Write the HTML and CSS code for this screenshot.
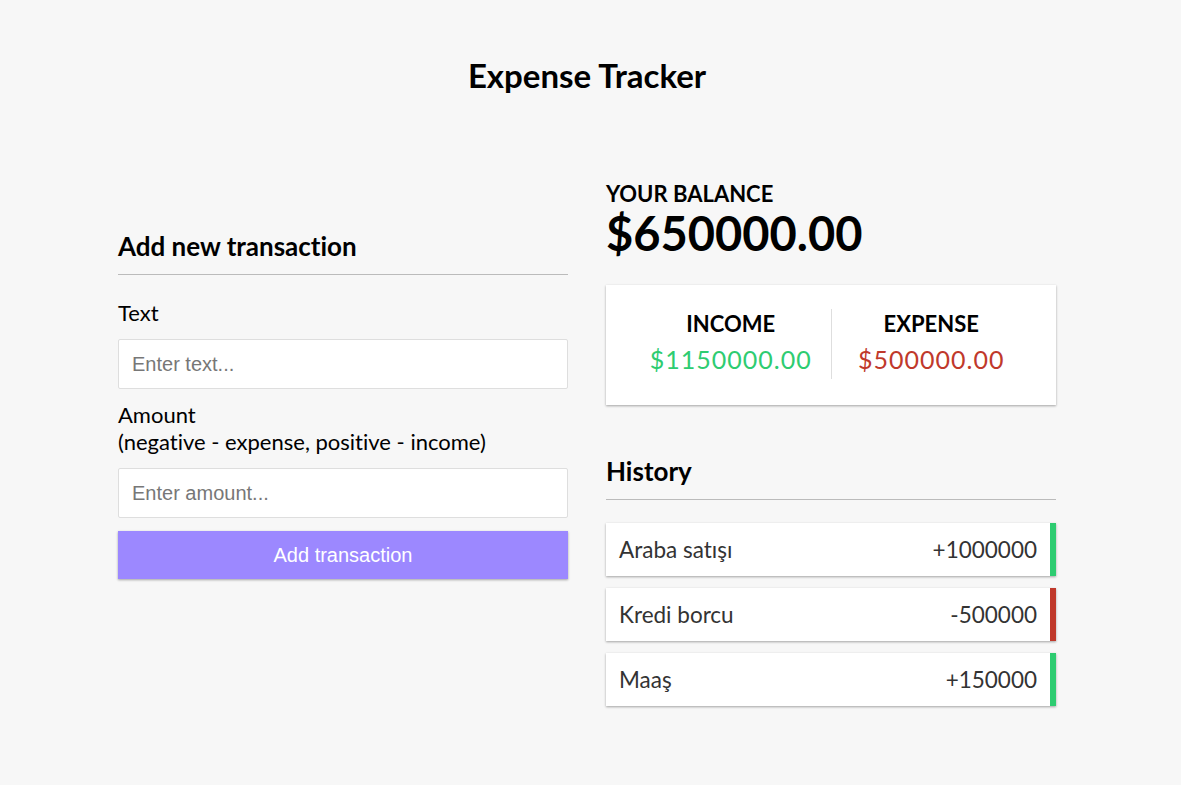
FILE: index.html
```html
<!DOCTYPE html>
<html lang="tr">
<head>
<meta charset="utf-8">
<title>Expense Tracker</title>
<link rel="stylesheet" href="styles.css">
</head>
<body>
<h1 class="title">Expense Tracker</h1>
<main class="main">
  <section class="form-col">
    <h3 class="section-title">Add new transaction</h3>
    <form class="form">
      <label class="label" for="text">Text</label>
      <input class="input" type="text" id="text" placeholder="Enter text...">
      <label class="label" for="amount">Amount <br>(negative - expense, positive - income)</label>
      <input class="input" type="text" id="amount" placeholder="Enter amount...">
      <button class="btn" type="button">Add transaction</button>
    </form>
  </section>
  <section class="info-col">
    <h4 class="balance-label">Your Balance</h4>
    <div class="balance">$650000.00</div>
    <div class="inc-exp">
      <div class="inc-exp-item inc-exp-first">
        <h4 class="inc-exp-title">Income</h4>
        <p class="money plus">$1150000.00</p>
      </div>
      <div class="inc-exp-item">
        <h4 class="inc-exp-title">Expense</h4>
        <p class="money minus">$500000.00</p>
      </div>
    </div>
    <h3 class="section-title history-title">History</h3>
    <ul class="list">
      <li class="list-item plus"><span>Araba satışı</span><span>+1000000</span></li>
      <li class="list-item minus"><span>Kredi borcu</span><span>-500000</span></li>
      <li class="list-item plus"><span>Maaş</span><span>+150000</span></li>
    </ul>
  </section>
</main>
</body>
</html>
```
FILE: styles.css
```css
* { box-sizing: border-box; }
body {
  margin: 0;
  background: #f7f7f7;
  font-family: Lato, "Open Sans", sans-serif;
  font-variant-ligatures: none;
  color: #000;
}
.title {
  margin: 0;
  padding-top: 54px;
  padding-right: 7px;
  text-align: center;
  font-size: 33px;
  line-height: 42px;
  font-weight: 700;
}
.main {
  display: flex;
  justify-content: center;
  align-items: flex-start;
  gap: 38px;
  padding-right: 7px;
  margin-top: 85px;
}
.form-col, .info-col { width: 450px; }
.form-col { margin-top: 49px; }
.section-title {
  margin: 0;
  font-size: 26px;
  line-height: 32px;
  font-weight: 700;
  border-bottom: 1px solid #bbb;
  padding-bottom: 12px;
}
.form { display: flex; flex-direction: column; }
.label {
  font-size: 22px;
  line-height: 27px;
  margin: 24px 0 13px;
}
.label + .input + .label { margin-top: 12px; }
.input {
  display: block;
  width: 100%;
  height: 50px;
  border: 1px solid #dedede;
  border-radius: 2px;
  background: #fff;
  font-family: "Liberation Sans", Arial, sans-serif;
  font-size: 20px;
  padding: 0 13px;
  outline: none;
}
.input::placeholder { color: #777; }
.btn {
  margin-top: 13px;
  height: 48px;
  width: 100%;
  border: 0;
  background: #9c88ff;
  color: #fff;
  font-family: "Liberation Sans", Arial, sans-serif;
  font-size: 20px;
  box-shadow: 0 1px 3px rgba(0,0,0,0.12), 0 1px 2px rgba(0,0,0,0.24);
}
.balance-label {
  margin: 0;
  font-size: 22px;
  line-height: 26px;
  font-weight: 700;
  text-transform: uppercase;
}
.balance {
  font-size: 47px;
  line-height: 52px;
  font-weight: 700;
}
.inc-exp {
  margin-top: 26px;
  background: #fff;
  display: flex;
  padding: 24px 25px 26px;
  box-shadow: 0 1px 3px rgba(0,0,0,0.12), 0 1px 2px rgba(0,0,0,0.24);
}
.inc-exp-item { flex: 1; text-align: center; }
.inc-exp-first { border-right: 1px solid #dedede; }
.inc-exp-title {
  margin: 0;
  font-size: 22px;
  line-height: 30px;
  font-weight: 700;
  text-transform: uppercase;
}
.money {
  margin: 4px 0;
  font-size: 25px;
  line-height: 32px;
  letter-spacing: 1px;
}
.plus.money { color: #2ecc71; }
.minus.money { color: #c0392b; }
.history-title { margin-top: 50px; }
.list {
  list-style: none;
  margin: 23px 0 0;
  padding: 0;
}
.list-item {
  display: flex;
  justify-content: space-between;
  align-items: center;
  height: 53px;
  margin-bottom: 12px;
  padding: 0 13px;
  background: #fff;
  color: #333;
  font-size: 22.5px;
  box-shadow: 0 1px 3px rgba(0,0,0,0.12), 0 1px 2px rgba(0,0,0,0.24);
}
.list-item.plus { border-right: 6px solid #2ecc71; }
.list-item.minus { border-right: 6px solid #c0392b; }
```
